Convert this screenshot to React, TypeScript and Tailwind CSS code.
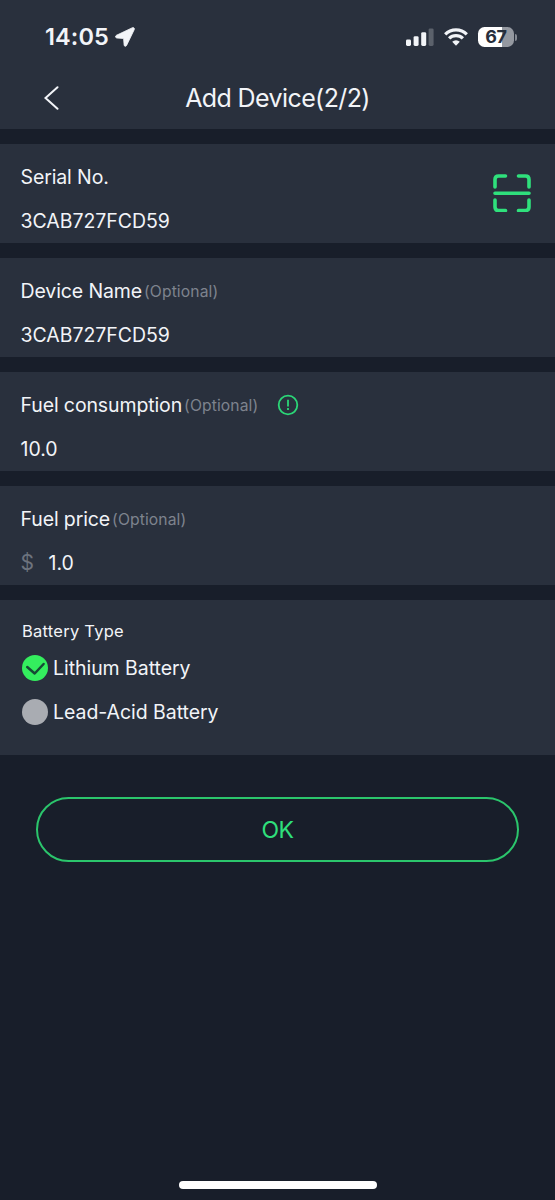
import type { ReactNode } from "react";

function StatusBar() {
  return (
    <div className="flex h-[67px] items-center pt-[7px] pl-[45px] pr-[38px]">
      <span className="text-[23.5px] leading-7 font-semibold tracking-[0.1px]">
        14:05
      </span>
      <svg viewBox="0 0 20 20" className="ml-[6px] h-5 w-5" fill="currentColor">
        <path d="M17.4.7 1.4 8.3C0 9 .3 10.8 1.8 11L8.6 11.5 9.1 18c.1 1.5 1.9 1.7 2.5.4L19.3 2.5c.5-1.2-.7-2.3-1.9-1.8Z" stroke="currentColor" strokeWidth="0.8" />
      </svg>

      <div className="ml-auto flex items-center">
        <svg viewBox="0 0 28 18" className="h-[18px] w-7" fill="currentColor">
          <rect x="0" y="11.5" width="5" height="6.5" rx="1.4" />
          <rect x="7.6" y="8.2" width="5" height="9.8" rx="1.4" />
          <rect x="15.2" y="4.2" width="5" height="13.8" rx="1.4" />
          <rect x="22.6" y="0.4" width="5" height="17.6" rx="1.4" opacity="0.25" />
        </svg>
        <svg viewBox="0 0 24 18" className="ml-[10px] h-[18px] w-6" fill="none" stroke="currentColor" strokeWidth="3.2">
          <path d="M1.2 6.3a15.3 15.3 0 0 1 21.6 0" />
          <path d="M5.1 10.4a9.8 9.8 0 0 1 13.8 0" />
          <path d="M12 17.7 8.2 13.8a5.4 5.4 0 0 1 7.6 0Z" fill="currentColor" stroke="none" />
        </svg>
        <div className="ml-[10px] flex h-5 w-9 items-center justify-center rounded-[6.5px] bg-linear-to-r from-white from-67% to-[#9498a0] to-67% text-[18px] leading-5 font-bold tracking-[-0.3px] text-[#272e3a]">
          67
        </div>
        <div className="ml-px h-[7px] w-[2px] rounded-r-full bg-[#858a93]" />
      </div>
    </div>
  );
}

interface FieldProps {
  label: string;
  value: string;
  optional?: boolean;
  prefix?: string;
  labelIcon?: ReactNode;
  action?: ReactNode;
}

function Field({ label, value, optional, prefix, labelIcon, action }: FieldProps) {
  return (
    <section className="flex h-[99px] items-center justify-between bg-[#29303d] pr-6 pl-[20.5px]">
      <div className="flex flex-col gap-4 pt-[11px]">
        <div className="flex h-7 items-center">
          <span className="text-[19.5px] leading-7 tracking-[-0.12px]">{label}</span>
          {optional && (
            <span className="ml-[2px] pt-px text-[15.7px] leading-7 tracking-[0.1px] text-[#7e838e]">
              (Optional)
            </span>
          )}
          {labelIcon}
        </div>
        <div className="flex h-7 items-center text-[19.5px] leading-7 tracking-[-0.05px]">
          {prefix && <span className="w-7 text-[21px] text-[#6d737e]">{prefix}</span>}
          <span>{value}</span>
        </div>
      </div>
      {action}
    </section>
  );
}

function ScanIcon() {
  return (
    <svg viewBox="0 0 38 38" className="-mt-px h-[38px] w-[38px] text-[#2fe07c]" fill="none" stroke="currentColor" strokeWidth="3.6" strokeLinecap="round" strokeLinejoin="round">
      <path d="M2 13V5.5Q2 2 5.5 2H12.5M25.5 2h7Q36 2 36 5.5V13M36 26v7q0 3.5-3.5 3.5h-7M12.5 36.5h-7Q2 36.5 2 33V26M2 19.2h34" />
    </svg>
  );
}

function InfoIcon() {
  return (
    <svg viewBox="0 0 22 22" className="ml-[19px] h-[22px] w-[22px] text-[#2bd677]" fill="none" stroke="currentColor" strokeWidth="1.8">
      <circle cx="11" cy="11" r="9.3" />
      <path d="M11 5.8v6.8M11 14v2" />
    </svg>
  );
}

function BatteryOption({ label, checked }: { label: string; checked?: boolean }) {
  return (
    <div className="flex h-11 items-center gap-[5px]">
      {checked ? (
        <svg viewBox="0 0 26 26" className="h-[26px] w-[26px]" fill="none">
          <circle cx="13" cy="13" r="13" fill="#34ee5e" />
          <path d="m5.2 12 7.5 6.5 8.9-9.5" stroke="#164b35" strokeWidth="2.5" strokeLinecap="round" strokeLinejoin="round" />
        </svg>
      ) : (
        <span className="h-[26px] w-[26px] rounded-full bg-[#a9acb2]" />
      )}
      <span className="text-[19.5px] leading-7 tracking-[-0.05px]">{label}</span>
    </div>
  );
}

export default function App() {
  return (
    <div className="flex h-[1200px] w-[555px] flex-col bg-[#181e2a] font-['Inter',sans-serif] text-[#f2f4f8]">
      <header className="h-[129px] bg-[#29303d]">
        <StatusBar />
        <div className="grid h-[62px] grid-cols-[1fr_auto_1fr] items-center">
          <svg viewBox="0 0 16 24" className="ml-11 h-6 w-4" fill="none" stroke="currentColor" strokeWidth="2" strokeLinecap="round">
            <path d="M13.5 1.2 1.5 12l12 10.8" />
          </svg>
          <h1 className="text-[25px] leading-8 font-normal tracking-[-0.6px]">
            Add Device(2/2)
          </h1>
        </div>
      </header>

      <main className="mt-[15px] flex flex-col gap-[15px]">
        <Field label="Serial No." value="3CAB727FCD59" action={<ScanIcon />} />
        <Field label="Device Name" value="3CAB727FCD59" optional />
        <Field label="Fuel consumption" value="10.0" optional labelIcon={<InfoIcon />} />
        <Field label="Fuel price" value="1.0" optional prefix="$" />

        <section className="h-[155px] bg-[#29303d] pt-[17px] pl-[22px]">
          <h2 className="mb-px text-[16.5px] leading-7 tracking-[0.25px]">Battery Type</h2>
          <BatteryOption label="Lithium Battery" checked />
          <BatteryOption label="Lead-Acid Battery" />
        </section>
      </main>

      <button className="mx-9 mt-[42px] h-[65px] rounded-full border-2 border-[#2bc56c] text-[23px] leading-7 tracking-[-0.5px] text-[#2fe07c]">
        OK
      </button>

      <div className="mt-auto mb-[11px] h-2 w-[198px] self-center rounded-full bg-white" />
    </div>
  );
}
